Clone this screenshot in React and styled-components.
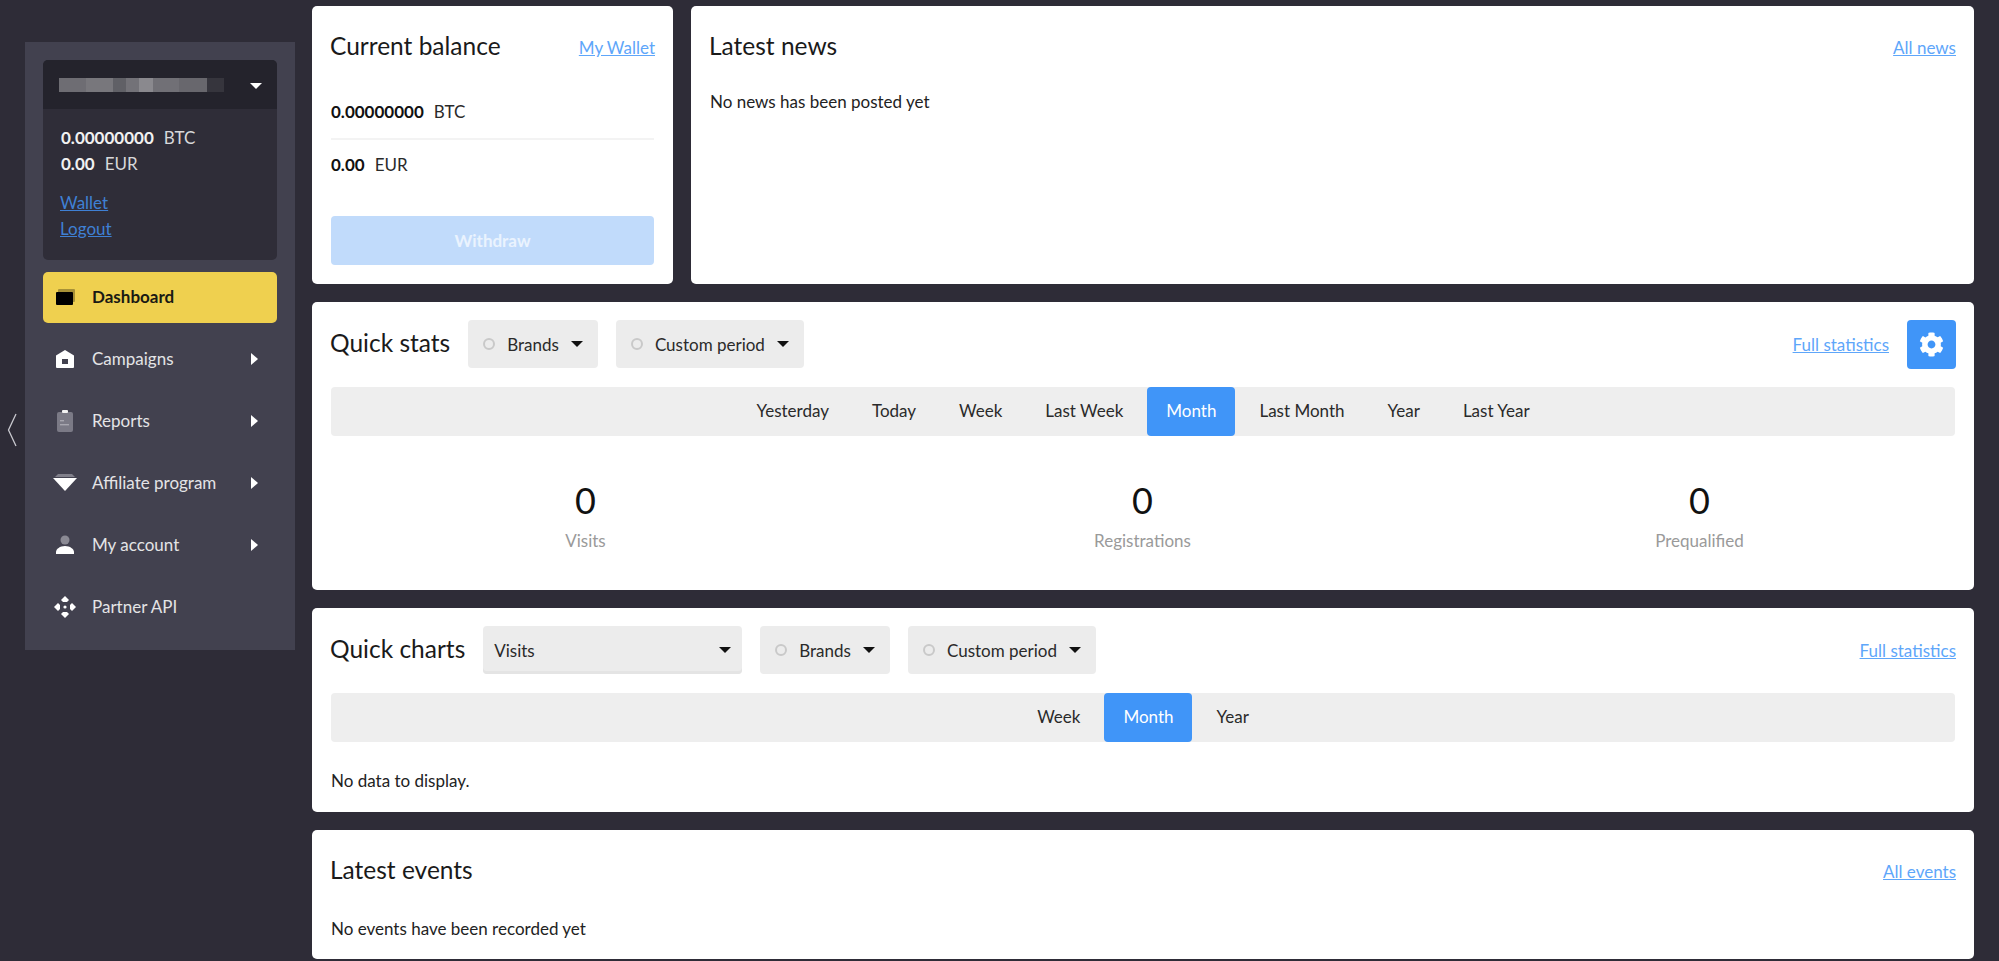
import styled, { createGlobalStyle } from 'styled-components';
import { FaCog } from 'react-icons/fa';

const Global = createGlobalStyle`
  html, body { margin: 0; padding: 0; height: 100%; overflow: hidden; background: #2e2c37; }
  body { font-family: Lato, "Open Sans", sans-serif; color: #1c1c1c; }
  * { box-sizing: border-box; }
`;

const DashboardIcon = () => (
  <svg width="20" height="16" viewBox="0 0 20 16">
    <rect x="3" y="0" width="17" height="13" rx="1" fill="#000" opacity=".3" />
    <rect x="1" y="3" width="17" height="13" rx="1" fill="#000" />
  </svg>
);
const CampaignIcon = () => (
  <svg width="20" height="20" viewBox="0 0 20 20">
    <path d="M10 1 19 6.5V18a1 1 0 0 1-1 1H2a1 1 0 0 1-1-1V6.5Z" fill="#fff" />
    <rect x="7" y="10" width="6" height="5" fill="#42414f" />
  </svg>
);
const ReportIcon = () => (
  <svg width="20" height="24" viewBox="0 0 20 24">
    <rect x="2" y="3" width="16" height="20" rx="2" fill="#7b7a86" />
    <rect x="7" y="1" width="6" height="3" rx="1" fill="#f2f2f2" />
    <rect x="5" y="11" width="4" height="1.4" fill="#a7a6af" />
    <rect x="5" y="15" width="9" height="1.4" fill="#a7a6af" />
  </svg>
);
const AffiliateIcon = () => (
  <svg width="24" height="18" viewBox="0 0 24 18">
    <path d="M5 0H19L22 3H2Z" fill="#807f8a" />
    <path d="M0 4H24L12 17Z" fill="#fff" />
  </svg>
);
const AccountIcon = () => (
  <svg width="20" height="20" viewBox="0 0 20 20">
    <circle cx="10" cy="5" r="4.5" fill="#8b8a94" />
    <path d="M1 19v-2c0-3 4-6 9-6s9 3 9 6v2Z" fill="#fff" />
  </svg>
);
const ApiIcon = () => (
  <svg width="24" height="24" viewBox="0 0 24 24" fill="#fff">
    <path d="M12 1 16 5 14 7H10L8 5Z" />
    <path d="M12 23 16 19 14 17H10L8 19Z" />
    <path d="M1 12 5 8 7 10V14L5 16Z" />
    <path d="M23 12 19 8 17 10V14L19 16Z" />
    <circle cx="12" cy="12" r="1.6" />
  </svg>
);

const navItems = [
  { label: 'Dashboard', icon: <DashboardIcon />, active: true },
  { label: 'Campaigns', icon: <CampaignIcon />, arrow: true },
  { label: 'Reports', icon: <ReportIcon />, arrow: true },
  { label: 'Affiliate program', icon: <AffiliateIcon />, arrow: true },
  { label: 'My account', icon: <AccountIcon />, arrow: true },
  { label: 'Partner API', icon: <ApiIcon /> },
];

const periods = ['Yesterday', 'Today', 'Week', 'Last Week', 'Month', 'Last Month', 'Year', 'Last Year'];
const stats = ['Visits', 'Registrations', 'Prequalified'];

function Dropdown({ label }) {
  return (
    <Drop>
      <Dot />
      <span>{label}</span>
      <Caret />
    </Drop>
  );
}

function Tabs({ items, active }) {
  return (
    <TabBar>
      {items.map((t) => (
        <Tab key={t} $active={t === active}>{t}</Tab>
      ))}
    </TabBar>
  );
}

export default function App() {
  return (
    <Page>
      <Global />
      <Collapse viewBox="0 0 10 34" width="10" height="34">
        <path d="M9 1 1.5 17 9 33" fill="none" stroke="#c9c9cf" strokeWidth="1.3" />
      </Collapse>
      <Sidebar>
        <UserBox>
          <UserHead>
            <Redacted />
            <WhiteCaret />
          </UserHead>
          <UserBody>
            <Balance><b>0.00000000</b>BTC</Balance>
            <Balance><b>0.00</b>EUR</Balance>
            <UserLinks>
              <a href="#wallet">Wallet</a>
              <a href="#logout">Logout</a>
            </UserLinks>
          </UserBody>
        </UserBox>
        <Nav>
          {navItems.map((item) => (
            <NavItem key={item.label} $active={item.active}>
              <NavIcon>{item.icon}</NavIcon>
              <span>{item.label}</span>
              {item.arrow && <NavArrow />}
            </NavItem>
          ))}
        </Nav>
      </Sidebar>
      <Main>
        <TopRow>
          <BalanceCard>
            <CardHead>
              <Title>Current balance</Title>
              <Link href="#wallet">My Wallet</Link>
            </CardHead>
            <BalanceRow $line><b>0.00000000</b>BTC</BalanceRow>
            <BalanceRow><b>0.00</b>EUR</BalanceRow>
            <Withdraw>Withdraw</Withdraw>
          </BalanceCard>
          <NewsCard>
            <CardHead>
              <Title>Latest news</Title>
              <Link href="#news">All news</Link>
            </CardHead>
            <Note>No news has been posted yet</Note>
          </NewsCard>
        </TopRow>

        <StatsCard>
          <Toolbar>
            <Title>Quick stats</Title>
            <Dropdown label="Brands" />
            <Dropdown label="Custom period" />
            <Spacer />
            <Link href="#stats">Full statistics</Link>
            <GearButton><FaCog size={25} /></GearButton>
          </Toolbar>
          <Tabs items={periods} active="Month" />
          <Stats>
            {stats.map((s) => (
              <Stat key={s}>
                <strong>0</strong>
                <span>{s}</span>
              </Stat>
            ))}
          </Stats>
        </StatsCard>

        <ChartsCard>
          <Toolbar>
            <Title>Quick charts</Title>
            <SelectBox>
              <span>Visits</span>
              <Caret />
            </SelectBox>
            <Dropdown label="Brands" />
            <Dropdown label="Custom period" />
            <Spacer />
            <Link href="#stats">Full statistics</Link>
          </Toolbar>
          <Tabs items={['Week', 'Month', 'Year']} active="Month" />
          <EmptyNote>No data to display.</EmptyNote>
        </ChartsCard>

        <EventsCard>
          <CardHead>
            <Title>Latest events</Title>
            <Link href="#events">All events</Link>
          </CardHead>
          <EventsNote>No events have been recorded yet</EventsNote>
        </EventsCard>
      </Main>
    </Page>
  );
}

const Page = styled.div`
  display: flex;
  align-items: flex-start;
  gap: 17px;
  height: 961px;
  padding: 0 25px 0 25px;
`;
const Collapse = styled.svg`
  position: absolute;
  left: 7px;
  top: 413px;
`;
const Sidebar = styled.aside`
  width: 270px;
  flex: none;
  margin-top: 42px;
  height: 608px;
  padding: 18px;
  background: #42414f;
`;
const UserBox = styled.div`
  border-radius: 5px;
  overflow: hidden;
  background: #2f2d38;
  height: 200px;
`;
const UserHead = styled.div`
  display: flex;
  align-items: center;
  justify-content: space-between;
  height: 49px;
  padding: 0 15px 0 16px;
  background: #24232c;
`;
const Redacted = styled.div`
  width: 165px;
  height: 14px;
  filter: blur(.6px);
  background: linear-gradient(90deg, #6e6d73 0 27px, #78777c 27px 54px, #606066 54px 67px, #737278 67px 80px,
    #8a898e 80px 94px, #717076 94px 120px, #68676d 120px 148px, #36353d 148px 165px);
`;
const WhiteCaret = styled.i`
  width: 0;
  height: 0;
  margin-top: 2px;
  border-left: 6px solid transparent;
  border-right: 6px solid transparent;
  border-top: 6px solid #fff;
`;
const UserBody = styled.div`
  padding: 17px 18px;
  font-size: 17px;
  color: #d8d8da;
`;
const Balance = styled.div`
  height: 25.5px;
  line-height: 24px;
  b { color: #f1f1f1; font-weight: 700; margin-right: 10px; }
`;
const UserLinks = styled.div`
  display: flex;
  flex-direction: column;
  align-items: flex-start;
  margin-top: 14px;
  margin-left: -1px;
  a { color: #3f80d4; height: 25.5px; line-height: 24px; }
`;
const Nav = styled.nav`
  display: flex;
  flex-direction: column;
  gap: 11px;
  margin-top: 12px;
`;
const NavItem = styled.div`
  position: relative;
  display: flex;
  align-items: center;
  height: 51px;
  padding-bottom: 2px;
  border-radius: 5px;
  font-size: 17px;
  font-weight: ${(p) => (p.$active ? 700 : 400)};
  color: ${(p) => (p.$active ? '#1a1a14' : '#e4e4e6')};
  background: ${(p) => (p.$active ? '#efd04f' : 'transparent')};
`;
const NavIcon = styled.div`
  display: flex;
  align-items: center;
  justify-content: center;
  width: 24px;
  margin-left: 10px;
  margin-right: 15px;
`;
const NavArrow = styled.i`
  position: absolute;
  left: 208px;
  top: 19px;
  width: 0;
  height: 0;
  border-top: 6px solid transparent;
  border-bottom: 6px solid transparent;
  border-left: 7px solid #fff;
`;
const Main = styled.main`
  flex: 1;
  min-width: 0;
  display: flex;
  flex-direction: column;
  gap: 18px;
  padding-top: 6px;
`;
const TopRow = styled.div`
  display: flex;
  gap: 18px;
`;
const Card = styled.section`
  background: #fff;
  border-radius: 5px;
  padding: 18px 19px;
`;
const BalanceCard = styled(Card)`
  width: 361px;
  flex: none;
  height: 278px;
`;
const NewsCard = styled(Card)`
  flex: 1;
  height: 278px;
`;
const StatsCard = styled(Card)`
  height: 288px;
`;
const ChartsCard = styled(Card)`
  height: 204px;
`;
const EventsCard = styled(Card)`
  height: 129px;
`;
const CardHead = styled.div`
  display: flex;
  justify-content: space-between;
  align-items: center;
  height: 46px;
  margin-right: -1px;
`;
const Title = styled.h2`
  margin: 0 0 0 -1px;
  padding-bottom: 3px;
  font-size: 24.5px;
  font-weight: 400;
  color: #1a1a1a;
`;
const Link = styled.a`
  font-size: 17px;
  color: #5ea6fa;
  text-decoration: underline;
`;
const BalanceRow = styled.div`
  height: ${(p) => (p.$line ? '53px' : '48px')};
  margin-top: ${(p) => (p.$line ? '17px' : '0')};
  padding-bottom: ${(p) => (p.$line ? '3px' : '0')};
  display: flex;
  align-items: center;
  font-size: 17px;
  color: #2a2a2a;
  border-bottom: ${(p) => (p.$line ? '2px solid #f3f3f3' : '0')};
  b { font-weight: 700; margin-right: 10px; color: #111; }
`;
const Withdraw = styled.button`
  display: block;
  width: 323px;
  height: 49px;
  margin-top: 28px;
  border: 0;
  border-radius: 4px;
  background: #c1dbfb;
  color: #eaf3fe;
  font: 700 17px Lato, sans-serif;
`;
const Note = styled.p`
  margin: 21px 0 0;
  font-size: 17px;
  color: #222;
`;
const Toolbar = styled.div`
  display: flex;
  align-items: center;
  gap: 18px;
  height: 48px;
  margin-right: -1px;
`;
const Spacer = styled.div`
  flex: 1;
`;
const Drop = styled.div`
  display: flex;
  align-items: center;
  height: 48px;
  padding: 0 15px;
  border-radius: 4px;
  background: #ececec;
  font-size: 17px;
  color: #2a2a2a;
`;
const Dot = styled.i`
  width: 12px;
  height: 12px;
  margin-right: 12px;
  border: 2px solid #c9c9c9;
  border-radius: 50%;
`;
const Caret = styled.i`
  width: 0;
  height: 0;
  margin-left: 12px;
  border-left: 6px solid transparent;
  border-right: 6px solid transparent;
  border-top: 6px solid #111;
`;
const SelectBox = styled(Drop)`
  justify-content: space-between;
  width: 259px;
  padding: 0 11px;
  box-shadow: inset 0 -3px 0 #e4e4e4;
`;
const GearButton = styled.button`
  display: flex;
  align-items: center;
  justify-content: center;
  width: 49px;
  height: 49px;
  border: 0;
  border-radius: 4px;
  background: #4095f8;
  color: #fff;
`;
const TabBar = styled.div`
  display: flex;
  justify-content: center;
  gap: 5px;
  height: 49px;
  margin-top: 19px;
  border-radius: 4px;
  background: #eeeeee;
`;
const Tab = styled.div`
  display: flex;
  align-items: center;
  padding: 0 19px 2px;
  border-radius: 4px;
  font-size: 17px;
  color: ${(p) => (p.$active ? '#fff' : '#2a2a2a')};
  background: ${(p) => (p.$active ? '#4095f8' : 'transparent')};
`;
const Stats = styled.div`
  display: grid;
  grid-template-columns: repeat(3, 557px);
  margin: 46px -24px 0;
`;
const Stat = styled.div`
  display: flex;
  flex-direction: column;
  align-items: center;
  strong { font-size: 36px; font-weight: 400; color: #111; line-height: 36px; }
  span { margin-top: 12px; font-size: 17px; color: #9a9a9a; }
`;
const EmptyNote = styled.p`
  margin: 28px 0 0;
  font-size: 17px;
  color: #222;
`;
const EventsNote = styled.p`
  margin: 24px 0 0;
  font-size: 17px;
  color: #222;
`;
